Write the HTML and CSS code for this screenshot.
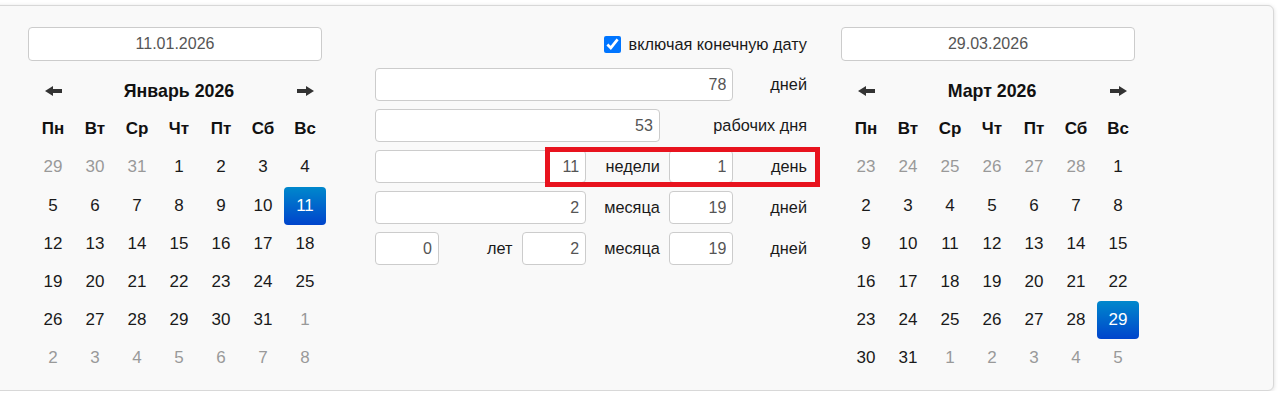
FILE: index.html
```html
<!DOCTYPE html>
<html lang="ru">
<head>
  <meta charset="UTF-8" />
  <meta name="viewport" content="width=device-width, initial-scale=1.0" />
  <title>Калькулятор дней</title>
  <link rel="stylesheet" href="styles.css">
</head>
<body>
<div class="panel">
  <div class="side">
    <input class="date" type="text" value="11.01.2026" />
    <div class="cal">
      <span class="nav"><svg width="17" height="10" viewBox="0 0 17 10"><path d="M0 5 L8 0 L8 3 L17 3 L17 7 L8 7 L8 10 Z" fill="#333"/></svg></span>
      <span class="title">Январь 2026</span>
      <span class="nav"><svg width="17" height="10" viewBox="0 0 17 10"><path d="M17 5 L9 0 L9 3 L0 3 L0 7 L9 7 L9 10 Z" fill="#333"/></svg></span>
      <b>Пн</b><b>Вт</b><b>Ср</b><b>Чт</b><b>Пт</b><b>Сб</b><b>Вс</b>
      <i>29</i><i>30</i><i>31</i><span>1</span><span>2</span><span>3</span><span>4</span>
      <span>5</span><span>6</span><span>7</span><span>8</span><span>9</span><span>10</span><span class="active">11</span>
      <span>12</span><span>13</span><span>14</span><span>15</span><span>16</span><span>17</span><span>18</span>
      <span>19</span><span>20</span><span>21</span><span>22</span><span>23</span><span>24</span><span>25</span>
      <span>26</span><span>27</span><span>28</span><span>29</span><span>30</span><span>31</span><i>1</i>
      <i>2</i><i>3</i><i>4</i><i>5</i><i>6</i><i>7</i><i>8</i>
    </div>
  </div>

  <div class="middle">
    <label class="check"><input type="checkbox" checked /> включая конечную дату</label>
    <div class="result">
      <input class="num span5" type="text" value="78" /><span class="lbl">дней</span>

      <input class="num span4" type="text" value="53" /><span class="lbl span2">рабочих дня</span>

      <input class="num span3" type="text" value="11" /><span class="lbl">недели</span>
      <input class="num" type="text" value="1" /><span class="lbl">день</span>

      <input class="num span3" type="text" value="2" /><span class="lbl">месяца</span>
      <input class="num" type="text" value="19" /><span class="lbl">дней</span>

      <input class="num" type="text" value="0" /><span class="lbl">лет</span>
      <input class="num" type="text" value="2" /><span class="lbl">месяца</span>
      <input class="num" type="text" value="19" /><span class="lbl">дней</span>
    </div>
    <div class="mark"></div>
  </div>

  <div class="side right">
    <input class="date" type="text" value="29.03.2026" />
    <div class="cal">
      <span class="nav"><svg width="17" height="10" viewBox="0 0 17 10"><path d="M0 5 L8 0 L8 3 L17 3 L17 7 L8 7 L8 10 Z" fill="#333"/></svg></span>
      <span class="title">Март 2026</span>
      <span class="nav"><svg width="17" height="10" viewBox="0 0 17 10"><path d="M17 5 L9 0 L9 3 L0 3 L0 7 L9 7 L9 10 Z" fill="#333"/></svg></span>
      <b>Пн</b><b>Вт</b><b>Ср</b><b>Чт</b><b>Пт</b><b>Сб</b><b>Вс</b>
      <i>23</i><i>24</i><i>25</i><i>26</i><i>27</i><i>28</i><span>1</span>
      <span>2</span><span>3</span><span>4</span><span>5</span><span>6</span><span>7</span><span>8</span>
      <span>9</span><span>10</span><span>11</span><span>12</span><span>13</span><span>14</span><span>15</span>
      <span>16</span><span>17</span><span>18</span><span>19</span><span>20</span><span>21</span><span>22</span>
      <span>23</span><span>24</span><span>25</span><span>26</span><span>27</span><span>28</span><span class="active">29</span>
      <span>30</span><span>31</span><i>1</i><i>2</i><i>3</i><i>4</i><i>5</i>
    </div>
  </div>
</div>
</body>
</html>
```

FILE: styles.css
```css
* {
  padding: 0;
  margin: 0;
  box-sizing: border-box;
}
body {
  background: #fff;
  font-family: "Liberation Sans", Arial, sans-serif;
  font-size: 16px;
  color: #1a1a1a;
}
.panel {
  display: flex;
  align-items: flex-start;
  margin: 5px 6px 0 -20px;
  height: 386px;
  padding: 21px 0 0 47px;
  background: #f9f9f9;
  border: 1px solid #d8d8d8;
  border-radius: 6px;
  box-shadow: 0 1px 4px rgba(0, 0, 0, 0.15);
}
.side {
  width: 300px;
}
.right {
  margin-left: 34px;
}
.date {
  display: block;
  width: 294px;
  height: 34px;
  border: 1px solid #ccc;
  border-radius: 4px;
  background: #fff;
  font: inherit;
  color: #555;
  text-align: center;
}
.cal {
  display: grid;
  grid-template-columns: repeat(7, 42px);
  grid-auto-rows: 38.2px;
  margin: 11px 0 0 4px;
  font-size: 17px;
}
.cal > * {
  display: flex;
  align-items: center;
  justify-content: center;
  font-style: normal;
}
.cal b {
  font-weight: bold;
  color: #111;
}
.cal i {
  color: #999;
}
.cal .title {
  grid-column: span 5;
  font-size: 17.8px;
  font-weight: bold;
  color: #111;
}
.cal .active {
  color: #fff;
  border-radius: 4px;
  background: linear-gradient(#0088cc, #0044cc);
}
.middle {
  position: relative;
  width: 432px;
  margin-left: 47px;
  font-size: 16.3px;
}
.check {
  display: flex;
  align-items: center;
  justify-content: flex-end;
  gap: 8px;
  height: 34px;
}
.check input {
  width: 17px;
  height: 17px;
  margin: 0;
  accent-color: #0075ff;
}
.result {
  display: grid;
  grid-template-columns: repeat(6, 1fr);
  grid-auto-rows: 33px;
  column-gap: 9.6px;
  row-gap: 8px;
  margin-top: 7px;
}
.num {
  min-width: 0;
  height: 33px;
  border: 1px solid #ccc;
  border-radius: 4px;
  background: #fff;
  font: inherit;
  font-size: 16px;
  color: #555;
  text-align: right;
  padding-right: 6px;
}
.span3 { grid-column: span 3; }
.span4 { grid-column: span 4; }
.span5 { grid-column: span 5; }
.span2 { grid-column: span 2; }
.lbl {
  display: flex;
  align-items: center;
  justify-content: flex-end;
  white-space: nowrap;
}
.mark {
  position: absolute;
  left: 170px;
  top: 120px;
  width: 275px;
  height: 40px;
  border: 5px solid #e8131e;
}
```
